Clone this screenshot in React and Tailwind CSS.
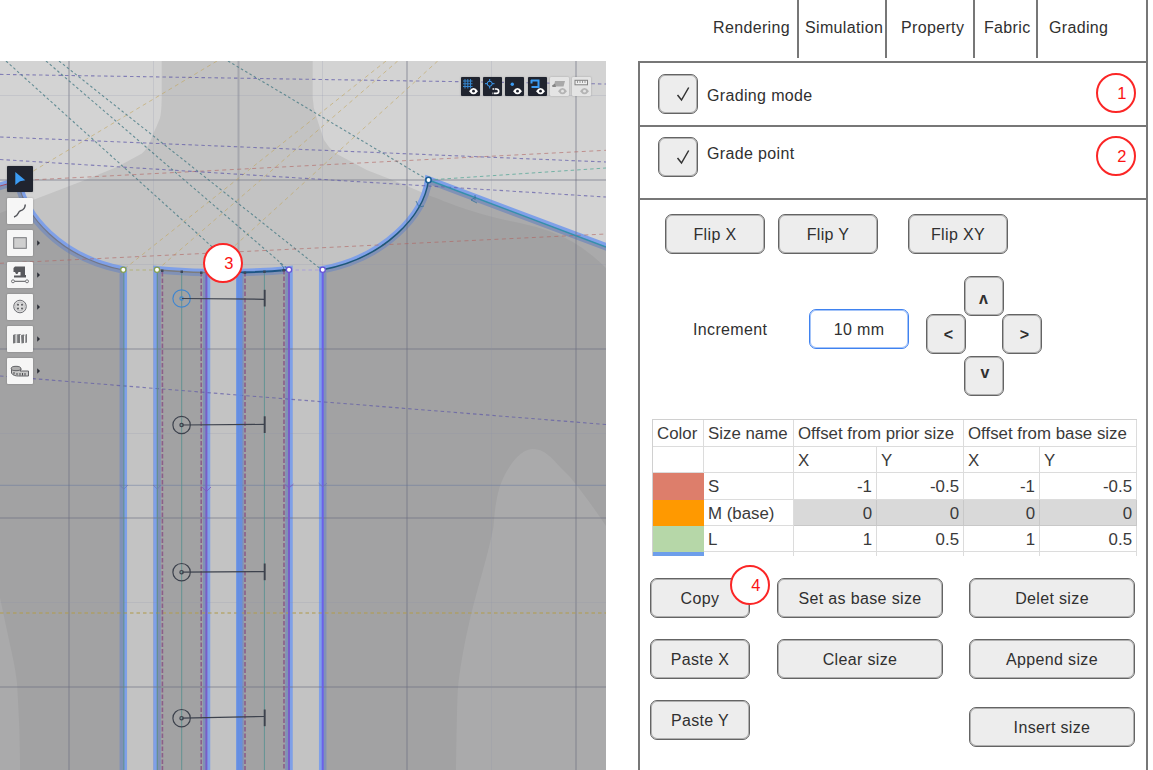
import React from "react";

const body =
  "M161.7 61V98Q161.5 112 160 118Q157 126 153 134Q149 147 142 153.500L117 167L80 182L33 200L0 213V598L10 645Q17 675 17.500 692Q20 730 20 770H456Q457 700 458 688C462 650 472 610 476.700 593C483 570 489 550 493.500 527C495 505 498 490 501.700 481.700C512 458 524 449 533 449C544 449 552 458 560 467Q570 476 578 487Q594 508 606 526V268Q590 252 573 242Q553 230 520 223C470 213 450 203 428 195L400 183L366.700 170L335 153Q328 147 324 140L316.700 118Q313 108 312.700 98V61Z";

const frontRight = "M322.700 269.700C385 258 424 215 428.500 180L612 249V780H322.700Z";
const frontLeft = "M-6 188L18 181C24 215 60 258 123.300 270V780H-6Z";
const stripA = "M157 269.700Q180 272 206.500 272.500V780H157Z";
const stripB = "M240 272.500Q266 272 289 269.700V780H240Z";

const purple = [
  [0, 74.4, 606, 84],
  [0, 137, 606, 162],
  [0, 159.500, 606, 197],
  [0, 376, 606, 424.500],
];
const red = [
  [20, 180.500, 606, 150.300],
  [0, 263.300, 606, 234],
];
const teal = [
  [6, 61, 240, 272],
  [46, 61, 289, 270],
  [59, 61, 322, 270],
  [228, 61, 428, 180],
];
const yellow = [
  [217, 61, 20, 179],
  [386, 61, 123, 270],
  [397.700, 61, 157, 270],
  [437.700, 61, 206, 272],
];

function Lines({ items, ...rest }) {
  return (
    <g {...rest}>
      {items.map(([x1, y1, x2, y2], i) => (
        <line key={i} x1={x1} y1={y1} x2={x2} y2={y2} />
      ))}
    </g>
  );
}

function PatternCanvas() {
  return (
    <svg className="block h-[709px] w-[606px]" viewBox="0 61 606 709" fill="none">
      <rect y="61" width="606" height="709" fill="#d3d3d3" />
      <path d={body} fill="#c3c3c3" />
      <g stroke="#7fa0e8" strokeWidth="7.500">
        <path d={frontRight} />
        <path d={frontLeft} />
        <path d={stripA} />
        <path d={stripB} />
      </g>
      <g fill="#818184" fillOpacity="0.5">
        <path d={frontRight} />
        <path d={frontLeft} />
        <path d={stripA} />
        <path d={stripB} />
      </g>
      <Lines
        stroke="#6a6e80"
        strokeOpacity="0.33"
        strokeWidth="2"
        items={[
          [69, 61, 69, 770], [238.500, 61, 238.500, 770], [407, 61, 407, 770], [576, 61, 576, 770],
          [0, 180, 606, 180], [0, 349, 606, 349], [0, 518, 606, 518], [0, 687, 606, 687],
        ]}
      />
      <Lines
        stroke="#8a90a8"
        strokeOpacity="0.2"
        strokeWidth="1"
        items={[
          [153.500, 61, 153.500, 770], [322.500, 61, 322.500, 770], [491.500, 61, 491.500, 770],
          [0, 95.500, 606, 95.500], [0, 264.500, 606, 264.500], [0, 433.500, 606, 433.500], [0, 602.500, 606, 602.500],
        ]}
      />
      <line x1="0" y1="485.300" x2="606" y2="485.300" stroke="#5f74a0" strokeOpacity="0.45" />

      <Lines items={yellow} stroke="#c2a55c" strokeOpacity="0.6" strokeDasharray="4 3.500" />
      <Lines items={teal} stroke="#3f7580" strokeOpacity="0.75" strokeWidth="1.100" strokeDasharray="2.600 2.400" />
      <Lines items={red} stroke="#b0625f" strokeOpacity="0.6" strokeDasharray="4 3.500" />
      <Lines items={purple} stroke="#5c56a6" strokeOpacity="0.68" strokeWidth="1.100" strokeDasharray="3.500 3" />
      <line x1="428" y1="180" x2="606" y2="168" stroke="#5aa898" strokeOpacity="0.8" strokeDasharray="3.500 3" />
      <line x1="0" y1="613" x2="606" y2="613" stroke="#b09c4e" strokeOpacity="0.7" strokeWidth="1.300" strokeDasharray="3.500 3" />
      <line x1="123" y1="270" x2="157" y2="270" stroke="#b3b27c" strokeDasharray="3.500 3" />
      <line x1="289" y1="270" x2="322" y2="270" stroke="#a9a0d8" strokeDasharray="3.500 3" />

      <path d="M322.700 269.700C385 258 424 215 428.500 180" stroke="#1e5878" strokeWidth="1.500" />
      <path d="M428.500 180L606 247" stroke="#3590ac" strokeWidth="1.500" />
      <path d="M18 181C24 215 60 258 123.300 270" stroke="#737787" strokeWidth="1.200" />
      <path d="M0 186L18 181" stroke="#a04860" />
      <path d="M157 269.700Q180 272 206.500 272.500" stroke="#7c7c7c" strokeWidth="1.500" />
      <path d="M240 272.500Q266 272 289 269.700" stroke="#1d5584" strokeWidth="2" />
      <path d="M239.300 273V770" stroke="#628de6" strokeWidth="6" strokeOpacity="0.8" />
      <path d="M123.800 270V770M157.300 270V770" stroke="#5f8e83" strokeOpacity="0.85" strokeWidth="1.200" />
      <path d="M206.400 272V770M289 270V770" stroke="#785dc8" strokeWidth="2" />
      <path d="M322.700 270V770" stroke="#6b61ea" strokeWidth="2" />
      <path d="M162.400 272V770M201.200 272V770M245 272V770M284 270V770" stroke="#8a5786" strokeWidth="1.600" strokeOpacity="0.9" strokeDasharray="4.500 2" />
      <path d="M181.700 271V770M264.400 271V770" stroke="#579090" strokeOpacity="0.85" />
      <path d="M119.500 485L123.800 489L128 485M153 485L157.300 489L161 485M318.500 483L322.700 487L327 483" stroke="#6f78b0" strokeOpacity="0.7" />
      <path d="M202 487L206.400 491.500L211 487M284.500 484L289 488L293.500 484" stroke="#8058c0" strokeOpacity="0.8" />
      <path d="M416 201L419 207L424 206M471 200L476 197M475 195V200M471 200L477 203M280 272L284 268L280 263" stroke="#35719a" strokeOpacity="0.8" />
      <g fill="#3e4858">
        <rect x="161" y="269.500" width="2.500" height="2.500" />
        <rect x="180.500" y="270.500" width="2.500" height="2.500" />
        <rect x="200" y="271.500" width="2.500" height="2.500" />
        <rect x="243.700" y="271.500" width="2.500" height="2.500" />
        <rect x="263.200" y="270.500" width="2.500" height="2.500" />
        <rect x="282.500" y="269" width="2.500" height="2.500" />
      </g>

      {[298.500, 425, 572.200, 718.200].map((y, i) => (
        <g key={y} stroke="#3d424d">
          <g stroke={i === 0 ? "#3f86d0" : "#3d424d"} strokeWidth="1.200">
            <circle cx="181.600" cy={y} r="8.700" />
            <circle cx="181.600" cy={y} r="1.700" />
          </g>
          <line x1="182" y1={y} x2="264.500" y2={i === 0 ? 299.300 : y - (i === 3 ? 1.700 : 0.600)} strokeWidth="1.200" />
          <line x1="264.700" y1={y - 8.700} x2="264.700" y2={y + 8} strokeWidth="1.900" />
        </g>
      ))}

      <g fill="#fff" strokeWidth="1.300">
        <circle cx="123.300" cy="269.800" r="2.600" stroke="#86a050" />
        <circle cx="157" cy="269.800" r="2.600" stroke="#86a050" />
        <circle cx="289" cy="269.800" r="2.600" stroke="#6753d4" />
        <circle cx="322.700" cy="269.800" r="2.600" stroke="#6753d4" />
        <circle cx="428.500" cy="180" r="2.700" stroke="#1c5f94" strokeWidth="1.600" />
      </g>
    </svg>
  );
}

const toolIcons = [
  <path d="M8.300 6L18.300 14.300L13 15.200L8.300 19Z" fill="#3b9cf4" />,
  <path d="M7 19C12 18 10.500 13.500 13.500 12.800C17 12 18 10 18.300 6.500" fill="none" stroke="#54565c" strokeWidth="1.500" />,
  <rect x="6.700" y="7.700" width="12.600" height="10.600" fill="#cfcfcf" stroke="#77787c" strokeWidth="1" />,
  <>
    <path d="M6.500 6L8 4.500H18V13H19V15.500H7V13.500H13.500V10H11.500L10.500 12H9L8 10H6.500Z" fill="#58595d" />
    <path d="M7.500 19.300H18.500" stroke="#58595d" />
    <circle cx="6" cy="19.300" r="1.500" fill="#f6f6f6" stroke="#58595d" strokeWidth="0.800" />
    <circle cx="20" cy="19.300" r="1.500" fill="#f6f6f6" stroke="#58595d" strokeWidth="0.800" />
  </>,
  <>
    <circle cx="13" cy="12.500" r="6.300" fill="#dcdcdc" stroke="#707176" />
    <circle cx="13" cy="12.500" r="4.300" fill="none" stroke="#a6a7aa" strokeWidth="0.500" />
    <g fill="#58595d">
      <circle cx="11" cy="10.700" r="1" />
      <circle cx="15" cy="10.700" r="1" />
      <circle cx="11" cy="14.400" r="1" />
      <circle cx="15" cy="14.400" r="1" />
    </g>
  </>,
  <>
    <path d="M6 9L8.500 8V17L6 17.500ZM10 8.500L13 8V17H10ZM14 9L17 8.500V17L14.500 17.500ZM18.500 8.500L20 8V16.500L18.500 17Z" fill="#77787b" />
    <path d="M8.500 8L10 9.500V17M13 8L14.500 9.500M17 8.500L18.500 10V17" fill="none" stroke="#9fa0a3" strokeWidth="0.900" />
  </>,
  <>
    <path d="M4.500 10.500V15C5.500 17.500 9 18 11.500 18H21.500V13H13Q15 12 13.500 10Z" fill="#c8c8c8" stroke="#626367" />
    <ellipse cx="9" cy="10.500" rx="4.800" ry="2.200" fill="#b0b0b0" stroke="#626367" />
    <path d="M7 14V16.500M10 15V17M13 15V17.500M15.500 15V17.500M18 15V17.500" stroke="#4b4c50" />
  </>,
];

function Toolbar() {
  return (
    <div className="absolute left-[7px] top-[105px] flex flex-col gap-[6px]">
      {toolIcons.map((icon, i) => (
        <div key={i} className="flex h-[26px] items-center gap-[4px]">
          <div
            className={
              "h-[26px] w-[26px] rounded-[1px] shadow-[0_0_2px_rgba(0,0,0,0.25)] " +
              (i === 0 ? "bg-[#20242f]" : "bg-[#f6f6f6]")
            }
          >
            <svg className="block h-[26px] w-[26px]" viewBox="0 0 26 26">{icon}</svg>
          </div>
          {i > 1 && (
            <svg className="-mt-[1px] h-[6px] w-[4px]" viewBox="0 0 4 6">
              <path d="M0.200 0.300L3 3L0.200 5.700Z" fill="#2b2e36" />
            </svg>
          )}
        </div>
      ))}
    </div>
  );
}

function Eye({ on }) {
  return (
    <>
      <path d="M8 14.200Q12.500 8 17 14.200Q12.500 20.400 8 14.200Z" fill={on ? "#fff" : "#b4b4b4"} />
      <circle cx="12.500" cy="14.200" r="1.400" fill={on ? "#20242f" : "#e4e4e4"} />
    </>
  );
}

const viewIcons = [
  <>
    <path d="M4 2V11.500M6.800 2V11.500M9.500 2V11.500M2 4H11.500M2 6.800H11.500M2 9.500H11.500" stroke="#3586cf" />
    <Eye on />
  </>,
  <>
    <circle cx="6.700" cy="6.700" r="2.500" fill="none" stroke="#3b9cf4" />
    <path d="M6.700 2V4.500M6.700 9V11.500M2 6.700H4.500M9 6.700H11.500" stroke="#3b9cf4" />
    <path d="M9.500 12H13.500A2.200 2.200 0 0 1 13.500 16.400H9.500" fill="none" stroke="#fff" strokeWidth="1.700" strokeDasharray="1.500 0.700 10.500 0.700 3" />
  </>,
  <>
    <circle cx="7.300" cy="7.300" r="1.700" fill="#3b9cf4" />
    <Eye on />
  </>,
  <>
    <path d="M3 3.500H10.500V10H3.500M3.500 3V6.500" fill="none" stroke="#3b9cf4" strokeWidth="2" />
    <Eye on />
  </>,
  <>
    <path d="M5 4H15L13.500 9.500H4Z" fill="#a9a9a9" />
    <path d="M2 8.500L5 6.500L6 10H2.500Z" fill="#858585" />
    <Eye />
  </>,
  <>
    <rect x="3" y="3.300" width="12.500" height="4.500" fill="#eee" stroke="#828282" />
    <path d="M5.500 3.500V6M8 3.500V6M10.500 3.500V6M13 3.500V6" stroke="#828282" strokeWidth="0.800" />
    <Eye />
  </>,
];

function ViewToggles() {
  return (
    <div className="absolute left-[461px] top-[16px] flex gap-[3.200px]">
      {viewIcons.map((icon, i) => (
        <div
          key={i}
          className={
            "h-[19px] w-[19px] rounded-[1px] shadow-[0_0_2px_rgba(0,0,0,0.25)] " +
            (i < 4 ? "bg-[#20242f]" : "bg-[#e4e4e4]")
          }
        >
          <svg className="block h-[19px] w-[19px]" viewBox="0 0 19 19">{icon}</svg>
        </div>
      ))}
    </div>
  );
}

function Badge({ n, className = "" }) {
  return (
    <span
      className={
        "flex h-[40px] w-[40px] items-center justify-center rounded-full border-2 border-[#fb2626] bg-white pl-[12px] text-[16.500px] leading-none text-[#fb1414] " +
        className
      }
    >
      {n}
    </span>
  );
}

function Btn({ children, className = "w-[100px]" }) {
  return (
    <button
      className={
        "flex h-[40px] shrink-0 items-center justify-center rounded-[7px] border border-[#646464] bg-[#ededed] leading-none shadow-[inset_0_0_0_1px_#b0b0b0] " +
        className
      }
    >
      {children}
    </button>
  );
}

function CheckRow({ label, n, className, textClass }) {
  return (
    <div className={"flex items-start border-b-2 border-[#777] pl-[18px] pr-[10px] " + className}>
      <Btn className="w-[40px]">
        <svg className="ml-[10px] h-[16px] w-[14px]" viewBox="0 0 14 16" fill="none" stroke="#333" strokeWidth="1.500">
          <path d="M1.500 9L5.500 14L12.700 1.500" />
        </svg>
      </Btn>
      <span className={"ml-[9px] flex-1 leading-[20px] " + textClass}>{label}</span>
      <Badge n={n} className="-mt-[1px]" />
    </div>
  );
}

const rows = [
  { name: "S", swatch: "bg-[#dd7e6b]", values: ["-1", "-0.5", "-1", "-0.5"] },
  { name: "M (base)", swatch: "bg-[#ff9900]", base: true, values: ["0", "0", "0", "0"] },
  { name: "L", swatch: "bg-[#b6d7a8]", values: ["1", "0.5", "1", "0.5"] },
];

const cell = "border-b border-r border-[#dcdcdc] pl-[4px] leading-[28px] whitespace-nowrap ";

function SizeTable() {
  return (
    <div className="ml-[12px] mt-[23px] grid w-[485px] grid-cols-[51px_90px_83px_87px_76px_97px] grid-rows-[27px_26px_27px_26px_26px_4px] border-l border-t border-[#d0d0d0] text-[16.850px] tracking-normal text-[#3a3a3a]">
      <div className={cell}>Color</div>
      <div className={cell}>Size name</div>
      <div className={cell + "col-span-2"}>Offset from prior size</div>
      <div className={cell + "col-span-2"}>Offset from base size</div>
      <div className={cell} />
      <div className={cell} />
      <div className={cell}>X</div>
      <div className={cell}>Y</div>
      <div className={cell}>X</div>
      <div className={cell}>Y</div>
      {rows.map((r) => (
        <React.Fragment key={r.name}>
          <div className={r.swatch} />
          <div className={cell}>{r.name}</div>
          {r.values.map((v, i) => (
            <div
              key={i}
              className={
                "border-b border-r pr-[4px] text-right leading-[28px] " +
                (r.base ? "border-[#c8c8c8] bg-[#d9d9d9]" : "border-[#dcdcdc]")
              }
            >
              {v}
            </div>
          ))}
        </React.Fragment>
      ))}
      <div className="bg-[#6d9eeb]" />
      {[0, 1, 2, 3, 4].map((i) => (
        <div key={i} className="border-r border-[#dcdcdc]" />
      ))}
    </div>
  );
}

function Tabs() {
  const tab = "flex h-[58px] items-center pb-[3px] border-[#777] ";
  return (
    <div className="flex h-[61px] items-start">
      <div className={tab + "w-[161px] border-r-2 pl-[75px]"}>Rendering</div>
      <div className={tab + "w-[88px] border-r-2 pl-[6px]"}>Simulation</div>
      <div className={tab + "w-[88px] border-r-2 pl-[14px]"}>Property</div>
      <div className={tab + "w-[63px] border-r-2 pl-[9px]"}>Fabric</div>
      <div className={tab + "pl-[11px]"}>Grading</div>
    </div>
  );
}

export default function App() {
  return (
    <div className="flex h-[770px] w-[1153px] overflow-hidden bg-white font-['Liberation_Sans',Arial,sans-serif] text-[16px] tracking-[0.350px] text-[#303030]">
      <section className="w-[606px] shrink-0 pt-[61px]">
        <div className="relative h-[709px] overflow-hidden">
          <PatternCanvas />
          <Toolbar />
          <ViewToggles />
          <Badge n="3" className="absolute left-[203px] top-[182px]" />
        </div>
      </section>

      <section className="ml-[32px] flex w-[510px] shrink-0 flex-col border-r-2 border-[#777]">
        <Tabs />
        <div className="flex-1 border-l-2 border-t-2 border-[#777]">
          <CheckRow label="Grading mode" n="1" className="h-[64px] pt-[11px]" textClass="mt-[12px]" />
          <CheckRow label="Grade point" n="2" className="h-[73px] pt-[10px]" textClass="mt-[7px]" />

          <div className="mt-[14px] flex pl-[25px]">
            <Btn className="w-[100px] pt-px">Flip X</Btn>
            <Btn className="ml-[13px] w-[100px] pt-px">Flip Y</Btn>
            <Btn className="ml-[30px] w-[100px] pt-px">Flip XY</Btn>
          </div>

          <div className="mt-[22px] flex h-[120px] items-start pl-[53px]">
            <span className="mt-[44px] w-[116px] leading-[20px]">Increment</span>
            <div className="mt-[33px] flex h-[40px] w-[100px] items-center justify-center rounded-[7px] border border-[#3f82f0] pt-[2px] shadow-[inset_0_0_0_1px_#a5c4f8]">
              10 mm
            </div>
            <div className="ml-[16px] flex w-[117px] flex-col items-center font-bold">
              <Btn className="w-[40px] pt-[5px]">ʌ</Btn>
              <div className="-mt-[2px] flex w-[116px] justify-between">
                <Btn className="w-[40px] pl-[6px] pt-[2px]">&lt;</Btn>
                <Btn className="w-[40px] pl-[6px] pt-[2px]">&gt;</Btn>
              </div>
              <Btn className="mt-[2px] w-[40px] pb-[6px] pl-[3px]">v</Btn>
            </div>
          </div>

          <SizeTable />

          <div className="mt-[22px] flex pl-[10px]">
            <div className="flex flex-col gap-[21px]">
              <div className="relative">
                <Btn className="w-[100px] pt-px">Copy</Btn>
                <Badge n="4" className="absolute -top-[13px] left-[80px]" />
              </div>
              <Btn className="w-[100px] pt-px">Paste X</Btn>
              <Btn className="w-[100px] pt-px">Paste Y</Btn>
            </div>
            <div className="ml-[27px] flex flex-col gap-[21px]">
              <Btn className="w-[166px] pt-px">Set as base size</Btn>
              <Btn className="w-[166px] pt-px">Clear size</Btn>
            </div>
            <div className="ml-[26px] flex flex-col gap-[21px]">
              <Btn className="w-[166px] pt-px">Delet size</Btn>
              <Btn className="w-[166px] pt-px">Append size</Btn>
              <Btn className="mt-[7px] w-[166px] pt-px">Insert size</Btn>
            </div>
          </div>
        </div>
      </section>
    </div>
  );
}
